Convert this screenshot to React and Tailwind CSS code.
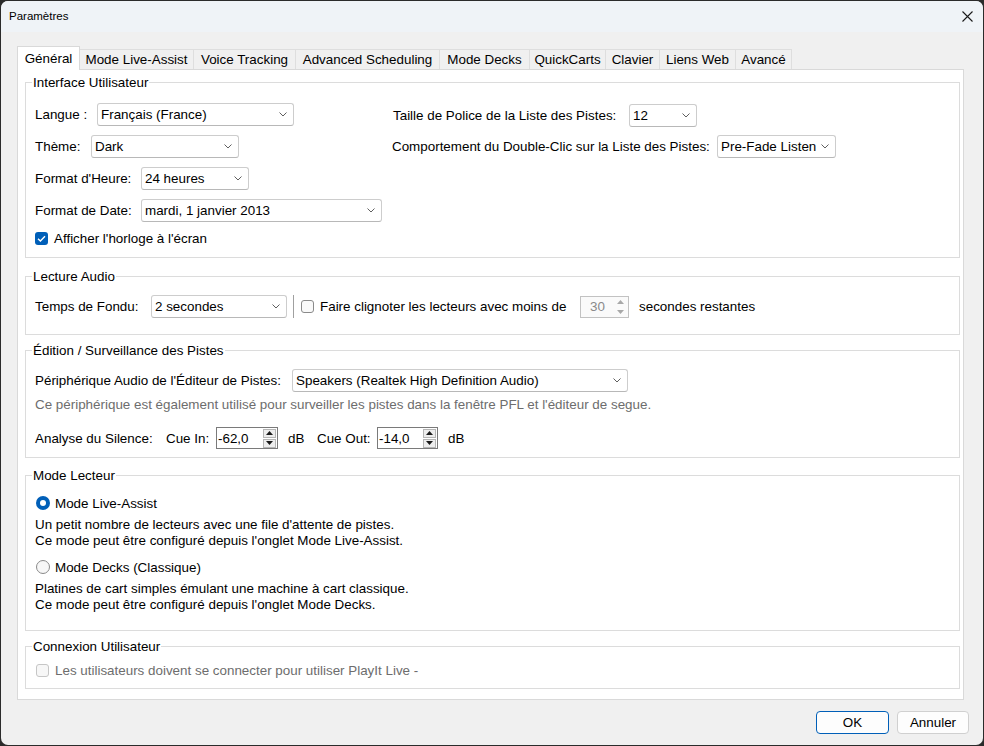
import React from "react";

function Chevron() {
  return (
    <svg width="8" height="5" viewBox="0 0 8 5" className="shrink-0">
      <path d="M0.5 0.5 L4 4 L7.5 0.5" stroke="#5f5f5f" strokeWidth="1" fill="none" />
    </svg>
  );
}

function Select({ w, value }) {
  return (
    <div className={`flex h-[23px] shrink-0 items-center justify-between rounded-[3px] border border-[#cdcdcd] border-b-[#b8b8b8] bg-white pl-[3px] pr-[6px] ${w}`}>
      <span className="whitespace-nowrap">{value}</span>
      <Chevron />
    </div>
  );
}

function Checkbox({ checked, disabled }) {
  if (checked) {
    return (
      <div className="flex h-[13px] w-[13px] shrink-0 items-center justify-center rounded-[3px] bg-[#005fb8]">
        <svg width="13" height="13" viewBox="0 0 13 13">
          <path d="M3 6.7 L5.4 9 L10 4.2" stroke="white" strokeWidth="1.4" fill="none" />
        </svg>
      </div>
    );
  }
  if (disabled) {
    return <div className="h-[13px] w-[13px] shrink-0 rounded-[3px] border border-[#c6c6c6] bg-[#f7f7f7]" />;
  }
  return <div className="h-[13px] w-[13px] shrink-0 rounded-[3px] border border-[#8a8a8a] bg-[#f9f9f9]" />;
}

function Radio({ checked }) {
  if (checked) {
    return (
      <div className="flex h-[14px] w-[14px] shrink-0 items-center justify-center rounded-full bg-[#005fb8]">
        <div className="h-[6px] w-[6px] rounded-full bg-white" />
      </div>
    );
  }
  return <div className="h-[14px] w-[14px] shrink-0 rounded-full border border-[#8a8a8a] bg-[#f7f7f7]" />;
}

function SpinButtons({ disabled }) {
  const color = disabled ? "#a8a8a8" : "#1a1a1a";
  const box = disabled
    ? "flex h-[9px] w-[13px] items-center justify-center"
    : "flex h-[9px] w-[13px] items-center justify-center border border-[#b5b5b5] bg-[#ededed]";
  return (
    <div className="flex flex-col gap-px pr-px">
      <div className={box}>
        <svg width="7" height="4" viewBox="0 0 7 4">
          <path d="M0 4 L3.5 0 L7 4 Z" fill={color} />
        </svg>
      </div>
      <div className={box}>
        <svg width="7" height="4" viewBox="0 0 7 4">
          <path d="M0 0 L3.5 4 L7 0 Z" fill={color} />
        </svg>
      </div>
    </div>
  );
}

function Group({ title, className, children }) {
  return (
    <fieldset className={`border border-[#dcdcdc] p-0 ${className}`}>
      <legend className="ml-[6px] px-[1px] leading-[15px]">{title}</legend>
      {children}
    </fieldset>
  );
}

const tabs = [
  ["Mode Live-Assist", "w-[114px]"],
  ["Voice Tracking", "w-[102px]"],
  ["Advanced Scheduling", "w-[144px]"],
  ["Mode Decks", "w-[90px]"],
  ["QuickCarts", "w-[76px]"],
  ["Clavier", "w-[54px]"],
  ["Liens Web", "w-[76px]"],
  ["Avancé", "w-[56px]"],
];

export default function App() {
  return (
    <div className="h-[746px] w-[984px] bg-[#2b2b2b] p-px font-['Liberation_Sans',Arial,sans-serif] text-[13.4px] leading-[15px] text-black">
      <div className="flex h-full flex-col overflow-hidden rounded-[7px] bg-[#f0f0f0]">
        {/* Title bar */}
        <div className="flex h-[31px] shrink-0 items-center justify-between bg-[#eff3f7] pl-[8px] pr-[10px]">
          <span className="text-[11.5px]">Paramètres</span>
          <svg width="11" height="11" viewBox="0 0 11 11">
            <path d="M0.5 0.5 L10.5 10.5 M10.5 0.5 L0.5 10.5" stroke="#1a1a1a" strokeWidth="1.1" />
          </svg>
        </div>

        {/* Tabs + panel */}
        <div className="mt-[14px] pl-[16px]">
          <div className="relative z-10 mb-[-1px] flex h-[24px] items-end">
            <div className="flex h-[24px] w-[63px] items-center justify-center border-l border-r border-t border-[#d9d9d9] bg-white pb-[1px]">
              Général
            </div>
            {tabs.map(([t, w]) => (
              <div
                key={t}
                className={`mb-px flex h-[20px] items-center justify-center border-r border-t border-[#dedede] bg-[#f0f0f0] whitespace-nowrap ${w}`}
              >
                {t}
              </div>
            ))}
          </div>

          <div className="flex h-[631px] w-[947px] flex-col border border-[#d9d9d9] bg-white pl-[7px] pr-[3px] pt-[5px]">
            {/* Interface Utilisateur */}
            <Group title="Interface Utilisateur">
              <div className="flex px-[9px] pb-[11px] pt-[13px]">
                <div className="flex w-[357px] shrink-0 flex-col">
                  <div className="flex flex-col gap-[9px]">
                    <div className="flex h-[23px] items-center">
                      <span className="w-[62px] shrink-0">Langue :</span>
                      <Select w="w-[197px]" value="Français (France)" />
                    </div>
                    <div className="flex h-[23px] items-center">
                      <span className="w-[56px] shrink-0">Thème:</span>
                      <Select w="w-[148px]" value="Dark" />
                    </div>
                    <div className="flex h-[23px] items-center">
                      <span className="w-[106px] shrink-0">Format d'Heure:</span>
                      <Select w="w-[108px]" value="24 heures" />
                    </div>
                    <div className="flex h-[23px] items-center">
                      <span className="w-[106px] shrink-0">Format de Date:</span>
                      <Select w="w-[241px]" value="mardi, 1 janvier 2013" />
                    </div>
                  </div>
                  <div className="mt-[9px] flex h-[15px] items-center gap-[6px]">
                    <Checkbox checked />
                    <span>Afficher l'horloge à l'écran</span>
                  </div>
                </div>
                <div className="flex flex-col gap-[8px] pt-px">
                  <div className="flex h-[23px] items-center">
                    <span className="ml-px w-[236px] shrink-0 whitespace-nowrap">Taille de Police de la Liste des Pistes:</span>
                    <Select w="w-[68px]" value="12" />
                  </div>
                  <div className="flex h-[23px] items-center">
                    <span className="w-[325px] shrink-0 whitespace-nowrap">Comportement du Double-Clic sur la Liste des Pistes:</span>
                    <Select w="w-[119px]" value="Pre-Fade Listen" />
                  </div>
                </div>
              </div>
            </Group>

            {/* Lecture Audio */}
            <Group title="Lecture Audio" className="mt-[11px]">
              <div className="mb-[16px] mt-[11px] flex h-[23px] items-center px-[9px]">
                <span className="w-[116px] shrink-0">Temps de Fondu:</span>
                <Select w="w-[136px]" value="2 secondes" />
                <div className="ml-[6px] h-[23px] w-px shrink-0 bg-[#a0a0a0]" />
                <div className="ml-[7px]">
                  <Checkbox />
                </div>
                <span className="ml-[6px] w-[260px] shrink-0 whitespace-nowrap">Faire clignoter les lecteurs avec moins de</span>
                <div className="flex h-[22px] w-[49px] shrink-0 items-center justify-between border border-[#c2c2c2] bg-[#fafafa]">
                  <span className="pl-[9px] text-[#8a8a8a]">30</span>
                  <SpinButtons disabled />
                </div>
                <span className="ml-[10px] whitespace-nowrap">secondes restantes</span>
              </div>
            </Group>

            {/* Édition */}
            <Group title="Édition / Surveillance des Pistes" className="mt-[8px]">
              <div className="flex flex-col px-[9px] pb-[8px] pt-[11px]">
                <div className="flex h-[23px] items-center">
                  <span className="w-[257px] shrink-0 whitespace-nowrap">Périphérique Audio de l'Éditeur de Pistes:</span>
                  <Select w="w-[336px]" value="Speakers (Realtek High Definition Audio)" />
                </div>
                <div className="mt-[5px] whitespace-nowrap text-[#6d6d6d]">
                  Ce périphérique est également utilisé pour surveiller les pistes dans la fenêtre PFL et l'éditeur de segue.
                </div>
                <div className="mt-[15px] flex h-[22px] items-center">
                  <span className="w-[131px] shrink-0 whitespace-nowrap">Analyse du Silence:</span>
                  <span className="w-[50px] shrink-0">Cue In:</span>
                  <div className="flex h-[22px] w-[62px] shrink-0 items-center justify-between border border-[#7a7a7a] bg-white">
                    <span className="pl-[1px]">-62,0</span>
                    <SpinButtons />
                  </div>
                  <span className="ml-[10px] w-[29px] shrink-0">dB</span>
                  <span className="w-[60px] shrink-0">Cue Out:</span>
                  <div className="flex h-[22px] w-[61px] shrink-0 items-center justify-between border border-[#7a7a7a] bg-white">
                    <span className="pl-[1px]">-14,0</span>
                    <SpinButtons />
                  </div>
                  <span className="ml-[10px]">dB</span>
                </div>
              </div>
            </Group>

            {/* Mode Lecteur */}
            <Group title="Mode Lecteur" className="mt-[10px]">
              <div className="flex flex-col px-[9px] pb-[17px] pt-[12px]">
                <div className="flex h-[16px] items-center gap-[5px] pl-px">
                  <Radio checked />
                  <span>Mode Live-Assist</span>
                </div>
                <div className="mt-[6px] leading-[16px]">
                  <div>Un petit nombre de lecteurs avec une file d'attente de pistes.</div>
                  <div>Ce mode peut être configuré depuis l'onglet Mode Live-Assist.</div>
                </div>
                <div className="mt-[10px] flex h-[16px] items-center gap-[5px] pl-px">
                  <Radio />
                  <span>Mode Decks (Classique)</span>
                </div>
                <div className="mt-[6px] leading-[16px]">
                  <div>Platines de cart simples émulant une machine à cart classique.</div>
                  <div>Ce mode peut être configuré depuis l'onglet Mode Decks.</div>
                </div>
              </div>
            </Group>

            {/* Connexion Utilisateur */}
            <Group title="Connexion Utilisateur" className="mt-[8px]">
              <div className="mb-[10px] mt-[8px] flex h-[16px] items-center gap-[6px] pl-[10px]">
                <Checkbox disabled />
                <span className="text-[#6d6d6d]">Les utilisateurs doivent se connecter pour utiliser PlayIt Live -</span>
              </div>
            </Group>
          </div>
        </div>

        {/* Buttons */}
        <div className="mt-[11px] flex justify-end gap-[8px] pr-[14px]">
          <div className="flex h-[23px] w-[73px] items-center justify-center rounded-[4px] border border-[#005fb8] bg-[#fdfdfd]">
            OK
          </div>
          <div className="flex h-[23px] w-[72px] items-center justify-center rounded-[4px] border border-[#d0d0d0] bg-[#fdfdfd]">
            Annuler
          </div>
        </div>
      </div>
    </div>
  );
}
